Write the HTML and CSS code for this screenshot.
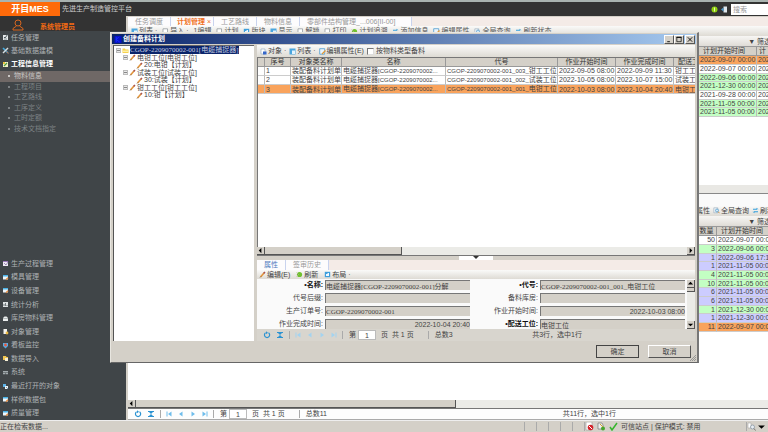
FILE: index.html
```html
<!DOCTYPE html>
<html lang="zh-CN">
<head>
    <meta charset="UTF-8">
    <meta name="viewport" content="width=device-width, initial-scale=1.0">
    <title>开目MES 先进生产制造管控平台</title>
    <link rel="stylesheet" href="styles.css">
</head>
<body>

<!-- 图标 -->
<svg class="defs" aria-hidden="true">
    <symbol id="i-task" viewBox="0 0 7 7"><path d="M1 1h5v5H1z" fill="#e4e8ea"/><path d="M2 3l1 1 3-4" stroke="#4b5558" fill="none"/><path d="M2 5h3" stroke="#8a9497"/></symbol>
    <symbol id="i-tools" viewBox="0 0 7 7"><path d="M1 1l5 5" stroke="#3fa9e0" stroke-width="1.6"/><path d="M6 1L1 6" stroke="#d5dde0" stroke-width="1.4"/><path d="M4.500 4.500l2 2" stroke="#d06a3a"/></symbol>
    <symbol id="i-note" viewBox="0 0 7 7"><path d="M1 1h5v5H1z" fill="#f2f0c8"/><path d="M2 5l3-3" stroke="#4f9a3a" stroke-width="1.3"/><path d="M1 1h2v2H1z" fill="#e8c33c"/></symbol>
    <symbol id="i-clip" viewBox="0 0 7 7"><path d="M1 1h5v5H1z" fill="#efe9f4"/><path d="M1 1h5v1H1z" fill="#9a78b8"/><path d="M2 3l2 2 2-3" stroke="#7d6a9a" fill="none" stroke-width=".7"/></symbol>
    <symbol id="i-card" viewBox="0 0 7 7"><path d="M1 1h5v4.500H1z" fill="#eef6fb"/><path d="M1 1h5v1.500H1z" fill="#4bb2e6"/><path d="M4 5.800l2-2" stroke="#e2883a" stroke-width="1.300"/></symbol>
    <symbol id="i-chart" viewBox="0 0 7 7"><path d="M1 1h5v5H1z" fill="#dfe3e4"/><path d="M2 5V3M3.500 5V2M5 5V4" stroke="#596366" stroke-width=".8"/></symbol>
    <symbol id="i-box" viewBox="0 0 7 7"><path d="M1 3l1.500-1.500h2L6 3v3H1z" fill="#eceeee"/><path d="M1 3.500h5" stroke="#8f989a" stroke-width=".6"/></symbol>
    <symbol id="i-doc" viewBox="0 0 7 7"><path d="M1.500 1H5v5H1.500z" fill="#f4f4ee"/><circle cx="5" cy="5" r="1.400" fill="#eebb45"/></symbol>
    <symbol id="i-shield" viewBox="0 0 7 7"><path d="M1 1h5v3L3.500 6.500 1 4z" fill="#56aee4"/><circle cx="3.500" cy="3" r="1.400" fill="#e9573c"/></symbol>
    <symbol id="i-import" viewBox="0 0 7 7"><path d="M1 1h3l.5 1H6v3H1z" fill="#f0c550"/><path d="M3 3h3v3H3z" fill="#f6efd5"/></symbol>
    <symbol id="i-sys" viewBox="0 0 7 7"><path d="M1 2h5v1.500H1zM1 4h2v1.200H1zM3.500 4H6v1.200H3.500z" fill="#a2abae"/></symbol>
    <symbol id="i-recent" viewBox="0 0 7 7"><path d="M1 1h3v3H1z" fill="#5fb4ea"/><path d="M3 3h3v3H3z" fill="#eef3f5"/><path d="M4 4l2 2" stroke="#4d7fa5" stroke-width=".7"/></symbol>
    <symbol id="i-obj" viewBox="0 0 7 7"><path d="M1 1h4v5H1z" fill="#fff" stroke="#8fa5bd" stroke-width=".6"/><path d="M3 3.500h3.500v3H3z" fill="#3566c9"/></symbol>
    <symbol id="i-list" viewBox="0 0 7 7"><path d="M.5.5h6v6h-6z" fill="#4ba6de"/><path d="M3 2.500h3V6H3z" fill="#e4f3fc"/></symbol>
    <symbol id="i-edit" viewBox="0 0 7 7"><path d="M.7.700h5v5.500h-5z" fill="#eaf4fb" stroke="#4f9dd0" stroke-width=".8"/><path d="M3 6l3.500-3.500" stroke="#e49a36" stroke-width="1.300"/></symbol>
    <symbol id="i-pen" viewBox="0 0 7 7"><path d="M1.500 6L5 2" stroke="#e3963c" stroke-width="1.700"/><path d="M4.600 2.400L6 1" stroke="#a9534d" stroke-width="1.500"/><path d="M1 6.500l1-1" stroke="#555" stroke-width=".8"/></symbol>
    <symbol id="i-folder" viewBox="0 0 7 7"><path d="M.5 1.500h2.500l.5 1H6.500V6h-6z" fill="#f7d24c"/><path d="M1 3.500h5V5H1z" fill="#fdf0a8"/></symbol>
    <symbol id="i-grey" viewBox="0 0 7 7"><path d="M1 .8h4.500v5.500H1z" fill="#fff" stroke="#8a9096" stroke-width=".7"/></symbol>
    <symbol id="i-green" viewBox="0 0 7 7"><circle cx="3.500" cy="3.500" r="2.600" fill="#6fc22c"/><path d="M.5 1.500l2 2-2 2" fill="none" stroke="#b9b0a0" stroke-width=".7"/></symbol>
    <symbol id="i-layout" viewBox="0 0 7 7"><path d="M.8.800h5.400v5.400H.8z" fill="#3e9fdc"/><path d="M2 3h1.500V2H5v3H2z" fill="#eef8ff"/></symbol>
    <symbol id="i-sync" viewBox="0 0 7 7"><path d="M1 2.300h4M6 4.700H2" stroke="#35a0dc" stroke-width="1.100"/><path d="M4.500.700L6.500 2.300H4.500zM2.500 6.300L.5 4.700h2z" fill="#35a0dc"/></symbol>
    <symbol id="i-search" viewBox="0 0 7 7"><path d="M.8.800h4v5h-4z" fill="#eef3f6" stroke="#9ab" stroke-width=".6"/><circle cx="4" cy="3.500" r="1.500" fill="#cfeafa" stroke="#4c97c8" stroke-width=".7"/><path d="M5 4.600l1.500 1.600" stroke="#c9863a" stroke-width=".9"/></symbol>
    <symbol id="i-refresh" viewBox="0 0 8 8"><path d="M5.500 1.800A2.600 2.600 0 1 1 2.600 1.800" fill="none" stroke="#2c93d2" stroke-width="1.200"/><path d="M3 .2v3l2-1.500z" fill="#2c93d2"/></symbol>
    <symbol id="i-fit" viewBox="0 0 8 8"><path d="M1 1.500h6M1 6.500h6" stroke="#2c93d2" stroke-width="1.100"/><path d="M2 2h4L4 4zM2 6h4L4 4z" fill="#2c93d2"/></symbol>
    <symbol id="i-first" viewBox="0 0 8 8"><path d="M2 1.500v5" stroke="currentColor"/><path d="M6.500 1.500v5L3 4z" fill="currentColor"/></symbol>
    <symbol id="i-prev" viewBox="0 0 8 8"><path d="M5.500 1.500v5L2 4z" fill="currentColor"/></symbol>
    <symbol id="i-next" viewBox="0 0 8 8"><path d="M2.500 1.500v5L6 4z" fill="currentColor"/></symbol>
    <symbol id="i-last" viewBox="0 0 8 8"><path d="M6 1.500v5" stroke="currentColor"/><path d="M1.500 1.500v5L5 4z" fill="currentColor"/></symbol>
    <symbol id="i-left" viewBox="0 0 8 8"><path d="M5 1v6L2 4z"/></symbol>
    <symbol id="i-right" viewBox="0 0 8 8"><path d="M3 1v6l3-3z"/></symbol>
    <symbol id="i-up" viewBox="0 0 8 8"><path d="M1 5h6L4 2z"/></symbol>
    <symbol id="i-down" viewBox="0 0 8 8"><path d="M1 3h6L4 6z"/></symbol>
</svg>

<header class="top">
    <div class="logo">开目MES</div>
    <h1>先进生产制造管控平台</h1>
    <svg class="top-icon" viewBox="0 0 7 7"><circle cx="3.500" cy="3.500" r="3" fill="#8fd010"/><path d="M3.500 1.500v4" stroke="#e9f7b0"/></svg>
    <svg class="top-icon" viewBox="0 0 7 7"><path d="M2.500.5H6v6H2.500z" fill="#dfe7ec"/><path d="M0 3.500l2.500-2v4z" fill="#4d9bd0"/></svg>
    <input class="search" type="text" placeholder="搜索" aria-label="搜索">
</header>

<div class="layout">
    <aside class="side">
        <div class="user">
            <svg class="user-icon" viewBox="0 0 12 12"><circle cx="6" cy="4" r="3" fill="none" stroke="#d9661f"/><path d="M1 11V9.500L4.500 7M11 11V9.500L7.500 7M1 11h10" fill="none" stroke="#d9661f"/></svg>
            <span>系统管理员</span>
        </div>
        <nav class="menu menu-top">
            <a href="#"><svg class="ico"><use href="#i-task"/></svg>任务管理</a>
            <a href="#"><svg class="ico"><use href="#i-tools"/></svg>基础数据建模</a>
            <a href="#" class="open"><svg class="ico"><use href="#i-note"/></svg>工程信息管理</a>
        </nav>
        <nav class="submenu">
            <a href="#" class="current">物料信息</a>
            <a href="#">工程项目</a>
            <a href="#">工艺路线</a>
            <a href="#">工序定义</a>
            <a href="#">工时定额</a>
            <a href="#">技术文档指定</a>
        </nav>
        <nav class="menu menu-bottom">
            <a href="#"><svg class="ico"><use href="#i-clip"/></svg>生产过程管理</a>
            <a href="#"><svg class="ico"><use href="#i-card"/></svg>模具管理</a>
            <a href="#"><svg class="ico"><use href="#i-card"/></svg>设备管理</a>
            <a href="#"><svg class="ico"><use href="#i-chart"/></svg>统计分析</a>
            <a href="#"><svg class="ico"><use href="#i-box"/></svg>库房物料管理</a>
            <a href="#"><svg class="ico"><use href="#i-doc"/></svg>对象管理</a>
            <a href="#"><svg class="ico"><use href="#i-shield"/></svg>看板监控</a>
            <a href="#"><svg class="ico"><use href="#i-import"/></svg>数据导入</a>
            <a href="#"><svg class="ico"><use href="#i-sys"/></svg>系统</a>
            <a href="#"><svg class="ico"><use href="#i-recent"/></svg>最近打开的对象</a>
            <a href="#"><svg class="ico"><use href="#i-card"/></svg>样例数据包</a>
            <a href="#"><svg class="ico"><use href="#i-card"/></svg>质量管理</a>
        </nav>
    </aside>

    <main class="content">
        <div class="tabs main-tabs">
            <a href="#">任务调度</a>
            <a href="#" class="active">计划管理<span class="x">×</span></a>
            <a href="#">工艺路线</a>
            <a href="#">物料信息</a>
            <a href="#" class="wide">零部件结构管理_...006[II-00]</a>
        </div>
        <div class="toolbar main-toolbar">
            <button><svg class="ico"><use href="#i-list"/></svg>列表 ·</button>
            <button><svg class="ico"><use href="#i-grey"/></svg>导入 ·</button>
            <button>1编辑</button>
            <button><svg class="ico"><use href="#i-grey"/></svg>计划</button>
            <button><svg class="ico"><use href="#i-layout"/></svg>版块</button>
            <button><svg class="ico"><use href="#i-list"/></svg>显示</button>
            <button><svg class="ico"><use href="#i-grey"/></svg>解锁</button>
            <button><svg class="ico"><use href="#i-grey"/></svg>打印</button>
            <button><svg class="ico"><use href="#i-green"/></svg>计划追溯</button>
            <button><svg class="ico"><use href="#i-sync"/></svg>添加信息</button>
            <button><svg class="ico"><use href="#i-edit"/></svg>编辑属性</button>
            <button><svg class="ico"><use href="#i-search"/></svg>全局查询</button>
            <button><svg class="ico"><use href="#i-sync"/></svg>刷新状态</button>
        </div>

        <div class="filter">▼ 筛选</div>
        <div class="pane pane-plan">
            <table class="grid">
                <colgroup><col><col class="c-date"><col class="c-cut"></colgroup>
                <thead><tr><th></th><th class="lead">计划开始时间</th><th>计</th></tr></thead>
                <tbody>
                    <tr class="orange"><td></td><td>2022-09-07 00:00</td><td>202</td></tr>
                    <tr><td></td><td>2022-09-07 00:00</td><td>202</td></tr>
                    <tr class="green"><td></td><td>2022-09-06 00:00</td><td>202</td></tr>
                    <tr class="green"><td></td><td>2021-12-30 00:00</td><td>202</td></tr>
                    <tr><td></td><td>2021-09-28 00:00</td><td>202</td></tr>
                    <tr class="green"><td></td><td>2021-11-05 00:00</td><td>202</td></tr>
                    <tr class="green"><td></td><td>2021-11-05 00:00</td><td>202</td></tr>
                </tbody>
            </table>
        </div>
        <div class="strip"></div>

        <div class="sub-tabs"></div>
        <div class="toolbar right-toolbar">
            <button>属性</button>
            <button><svg class="ico"><use href="#i-search"/></svg>全局查询</button>
            <button><svg class="ico"><use href="#i-sync"/></svg>刷新</button>
        </div>
        <div class="filter">▼ 筛选</div>
        <div class="pane pane-detail">
            <table class="grid">
                <colgroup><col><col class="c-num"><col class="c-last"></colgroup>
                <thead><tr><th></th><th>数量</th><th class="lead">计划开始时间</th></tr></thead>
                <tbody>
                    <tr><td></td><td class="num">50</td><td>2022-09-07 00:0</td></tr>
                    <tr class="green"><td></td><td class="num">3</td><td>2022-09-06 00:0</td></tr>
                    <tr class="violet"><td></td><td class="num">1</td><td>2022-09-06 17:1</td></tr>
                    <tr class="violet"><td></td><td class="num">1</td><td>2021-11-05 00:0</td></tr>
                    <tr class="green"><td></td><td class="num">4</td><td>2021-11-05 00:0</td></tr>
                    <tr class="green"><td></td><td class="num">10</td><td>2021-11-05 00:0</td></tr>
                    <tr class="violet"><td></td><td class="num">6</td><td>2021-11-05 00:0</td></tr>
                    <tr class="violet"><td></td><td class="num">6</td><td>2021-11-05 00:0</td></tr>
                    <tr class="green"><td></td><td class="num">1</td><td>2021-12-30 00:0</td></tr>
                    <tr class="violet"><td></td><td class="num">1</td><td>2021-12-30 00:0</td></tr>
                    <tr class="orange"><td></td><td class="num">11</td><td>2022-09-07 00:0</td></tr>
                </tbody>
            </table>
        </div>
        <div class="hscroll main-scroll">
            <button class="arrow" aria-label="向左"><svg><use href="#i-left"/></svg></button>
            <div class="thumb"></div>
        </div>
        <div class="pager main-pager">
            <button aria-label="刷新"><svg><use href="#i-refresh"/></svg></button>
            <button aria-label="适应"><svg><use href="#i-fit"/></svg></button>
            <div class="nav-btns">
                <button aria-label="首页"><svg><use href="#i-first"/></svg></button>
                <button aria-label="上一页"><svg><use href="#i-prev"/></svg></button>
                <button aria-label="下一页"><svg><use href="#i-next"/></svg></button>
                <button aria-label="末页"><svg><use href="#i-last"/></svg></button>
            </div>
            <label for="page-main">第</label>
            <input id="page-main" type="text" value="1">
            <span class="pages">页&nbsp; 共 1 页</span>
            <span class="total">总数11</span>
            <span class="sum">共11行，选中1行</span>
        </div>
    </main>
</div>

<footer class="status">
    <span class="loading">正在检索数据...</span>
    <span class="cell"></span><span class="cell"></span><span class="cell"></span><span class="cell"></span><span class="cell"></span>
    <span class="zone">
        <svg viewBox="0 0 9 9"><path d="M1 0h6v8H1z" fill="#fff" stroke="#999" stroke-width=".6"/><circle cx="5.500" cy="5.500" r="2.800" fill="#d3222a"/><path d="M4 4l3 3" stroke="#fff"/></svg>
        <svg viewBox="0 0 9 9"><path d="M1 1h4l1 2v4H1z" fill="#eee" stroke="#777" stroke-width=".7"/><circle cx="6" cy="6.500" r="2" fill="#46a52e"/><path d="M3 2l3 3" stroke="#c9a22c"/></svg>
        <svg viewBox="0 0 9 9"><path d="M1 5l2 3L8 1" fill="none" stroke="#35b52c" stroke-width="1.500"/></svg>
        <span>可信站点 | 保护模式: 禁用</span>
    </span>
    <span class="zoom">
        <svg viewBox="0 0 9 9"><path d="M1 1h3v5H1z" fill="#fff" stroke="#aaa" stroke-width=".6"/><circle cx="5.500" cy="5" r="2" fill="#e8eef3" stroke="#8b98a5" stroke-width=".8"/><path d="M7 6.500l1.500 2" stroke="#777"/></svg>
        <svg viewBox="0 0 8 8"><use href="#i-down"/></svg>
    </span>
</footer>

<!-- 创建备料计划 -->
<section class="dialog" role="dialog" aria-labelledby="dialog-title">
    <div class="titlebar">
        <svg class="app-icon" viewBox="0 0 8 8"><path d="M0 0h8v8H0z" fill="#0a12c8"/><path d="M2 1v6M2 4l3-3M2 4l4 3" stroke="#1734ff" fill="none"/></svg>
        <h2 id="dialog-title">创建备料计划</h2>
        <button aria-label="最小化"><svg viewBox="0 0 8 8"><path d="M2 6.500h3" stroke="#000"/></svg></button>
        <button aria-label="最大化"><svg viewBox="0 0 8 8"><path d="M1 1.500h6" stroke="#000"/><path d="M1.500 1.500h5v5h-5z" fill="none" stroke="#000" stroke-width=".8"/></svg></button>
        <button aria-label="关闭" class="close"><svg viewBox="0 0 8 8"><path d="M1.500 1.500l5 5M6.500 1.500l-5 5" stroke="#000"/></svg></button>
    </div>

    <div class="dialog-body">
        <ul class="tree">
            <li><i class="knob"></i><svg class="ico"><use href="#i-folder"/></svg><span class="sel">CGOP-2209070002-001[电缆捕捉器]</span></li>
            <li class="l1"><i class="knob"></i><svg class="ico"><use href="#i-pen"/></svg>电钳工位[电钳工位]</li>
            <li class="l2"><svg class="ico"><use href="#i-pen"/></svg>20:电钳【计划】</li>
            <li class="l1"><i class="knob"></i><svg class="ico"><use href="#i-pen"/></svg>试装工位[试装工位]</li>
            <li class="l2"><svg class="ico"><use href="#i-pen"/></svg>30:试装【计划】</li>
            <li class="l1"><i class="knob"></i><svg class="ico"><use href="#i-pen"/></svg>钳工工位[钳工工位]</li>
            <li class="l2"><svg class="ico"><use href="#i-pen"/></svg>10:钳【计划】</li>
        </ul>

        <div class="work">
            <div class="toolbar work-toolbar">
                <button><svg class="ico"><use href="#i-obj"/></svg>对象 ·</button>
                <button><svg class="ico"><use href="#i-list"/></svg>列表 ·</button>
                <button><svg class="ico"><use href="#i-edit"/></svg>编辑属性(E)</button>
                <span class="check"><input type="checkbox" id="by-type"><label for="by-type">按物料类型备料</label></span>
            </div>
            <div class="pane work-pane">
                <table class="grid">
                    <colgroup><col class="w-mark"><col class="w-no"><col class="w-type"><col class="w-name"><col class="w-code"><col class="w-date"><col class="w-date"><col></colgroup>
                    <thead><tr><th></th><th>序号</th><th>对象类名称</th><th>名称</th><th>代号</th><th>作业开始时间</th><th>作业完成时间</th><th class="lead">配送工</th></tr></thead>
                    <tbody>
                        <tr><td></td><td>1</td><td>装配备料计划单</td><td>电缆捕捉器<span class="code">[CGOP-2209070002...</span></td><td><span class="code">CGOP-2209070002-001_003_</span>钳工工位</td><td>2022-09-05 08:00</td><td>2022-09-09 11:30</td><td>钳工工</td></tr>
                        <tr><td></td><td>2</td><td>装配备料计划单</td><td>电缆捕捉器<span class="code">[CGOP-2209070002...</span></td><td><span class="code">CGOP-2209070002-001_002_</span>试装工位</td><td>2022-10-05 08:00</td><td>2022-10-07 15:00</td><td>试装工</td></tr>
                        <tr class="orange"><td></td><td>3</td><td>装配备料计划单</td><td>电缆捕捉器<span class="code">[CGOP-2209070002...</span></td><td><span class="code">CGOP-2209070002-001_001_</span>电钳工位</td><td>2022-10-03 08:00</td><td>2022-10-04 20:40</td><td>电钳工</td></tr>
                    </tbody>
                </table>
            </div>
            <div class="hscroll work-scroll">
                <button class="arrow" aria-label="向左"><svg><use href="#i-left"/></svg></button>
                <div class="thumb"></div>
                <button class="arrow end" aria-label="向右"><svg><use href="#i-right"/></svg></button>
            </div>
            <div class="splitter"><span><svg viewBox="0 0 8 4"><path d="M1 0h6L4 3z" fill="#333"/></svg></span></div>

            <div class="tabs work-tabs">
                <a href="#" class="active">属性</a>
                <a href="#">签审历史</a>
            </div>
            <div class="toolbar form-toolbar">
                <button><svg class="ico"><use href="#i-pen"/></svg>编辑(E)</button>
                <button><svg class="ico"><use href="#i-green"/></svg>刷新</button>
                <button><svg class="ico"><use href="#i-layout"/></svg>布局 ·</button>
            </div>
            <div class="form-wrap">
                <form class="form">
                    <label for="f-name" class="req">•名称:</label>
                    <input id="f-name" type="text" value="电缆捕捉器[CGOP-2209070002-001]分解" readonly>
                    <label for="f-code" class="req">•代号:</label>
                    <input id="f-code" type="text" value="CGOP-2209070002-001_001_电钳工位" readonly>
                    <label for="f-suffix">代号后缀:</label>
                    <input id="f-suffix" type="text" readonly>
                    <label for="f-store">备料库房:</label>
                    <input id="f-store" type="text" readonly>
                    <label for="f-order">生产订单号:</label>
                    <input id="f-order" type="text" value="CGOP-2209070002-001" readonly>
                    <label for="f-start">作业开始时间:</label>
                    <input id="f-start" class="date" type="text" value="2022-10-03 08:00" readonly>
                    <label for="f-end">作业完成时间:</label>
                    <input id="f-end" class="date" type="text" value="2022-10-04 20:40" readonly>
                    <label for="f-place" class="req">•配送工位:</label>
                    <input id="f-place" type="text" value="电钳工位" readonly>
                </form>
                <div class="vscroll">
                    <button class="arrow" aria-label="向上"><svg><use href="#i-up"/></svg></button>
                    <div class="thumb"></div>
                    <button class="arrow end" aria-label="向下"><svg><use href="#i-down"/></svg></button>
                </div>
            </div>
            <div class="pager">
                <button aria-label="刷新"><svg><use href="#i-refresh"/></svg></button>
                <button aria-label="适应"><svg><use href="#i-fit"/></svg></button>
                <div class="nav-btns">
                    <button aria-label="首页"><svg><use href="#i-first"/></svg></button>
                    <button aria-label="上一页"><svg><use href="#i-prev"/></svg></button>
                    <button aria-label="下一页"><svg><use href="#i-next"/></svg></button>
                    <button aria-label="末页"><svg><use href="#i-last"/></svg></button>
                </div>
                <label for="page-work">第</label>
                <input id="page-work" type="text" value="1">
                <span class="pages">页&nbsp; 共 1 页</span>
                <span class="total">总数3</span>
                <span class="sum">共3行，选中1行</span>
            </div>
        </div>
    </div>

    <div class="actions">
        <button class="ok">确定</button>
        <button>取消</button>
        <svg class="grip" viewBox="0 0 6 6"><path d="M0 6l6-6M2 6l4-4M4 6l2-2" stroke="#888" stroke-width=".8"/></svg>
    </div>
</section>

</body>
</html>
```
FILE: styles.css
```css
* {
    box-sizing: border-box;
}
body {
    margin: 0;
    height: 100vh;
    display: flex;
    flex-direction: column;
    position: relative;
    overflow: hidden;
    background: #d4d0c8;
    color: #444;
    font-family: "Liberation Sans", "Noto Sans CJK SC", sans-serif;
    font-size: 7px;
    line-height: 8px;
    white-space: nowrap;
}
button, input {
    font: inherit;
    color: inherit;
    margin: 0;
    padding: 0;
    border: 0;
    border-radius: 0;
    background: none;
}
a {
    color: inherit;
    text-decoration: none;
}
h1, h2 {
    margin: 0;
    font-size: 7px;
}
svg {
    display: block;
    flex: none;
}
.defs {
    position: absolute;
    width: 0;
    height: 0;
}
.ico {
    width: 7px;
    height: 7px;
}

/* шапка */
.top {
    display: flex;
    align-items: center;
    height: 16px;
    border-top: 2px solid #a9b3b0;
    background: #333;
    color: #ccc;
}
.logo {
    width: 60px;
    line-height: 14px;
    background: #ff6a0a;
    color: #fff;
    font-size: 9px;
    font-weight: bold;
    text-align: center;
}
.top h1 {
    flex: 1;
    margin-left: 2px;
    font-weight: normal;
}
.top-icon {
    width: 7px;
    height: 7px;
    margin-right: 3px;
}
.search {
    width: 37px;
    height: 11px;
    padding-left: 2px;
    background: #fff;
}
.search::placeholder {
    color: #999;
}

.layout {
    flex: 1;
    display: flex;
    min-height: 0;
}
.side {
    width: 126px;
    display: flex;
    flex-direction: column;
    background: #404548;
    color: #aeb2b4;
}
.user {
    display: flex;
    align-items: flex-end;
    height: 15px;
    padding-left: 12px;
    gap: 16px;
    background: #333;
    color: #f26a14;
    font-weight: bold;
}
.user-icon {
    width: 12px;
    height: 12px;
}
.menu, .submenu {
    display: grid;
    grid-auto-rows: 1fr;
}
.menu a {
    display: flex;
    align-items: center;
    gap: 2px;
    padding-left: 2px;
}
.menu-top {
    height: 40px;
}
.menu .open {
    color: #fff;
    font-weight: bold;
}
.submenu {
    height: 63px;
    color: #7d8285;
}
.submenu a {
    display: flex;
    align-items: center;
    padding-left: 8px;
}
.submenu a::before {
    content: "";
    width: 2px;
    height: 2px;
    margin-right: 4px;
    background: currentColor;
}
.submenu .current {
    background: #6f6866;
    color: #c9c6c4;
}
.menu-bottom {
    height: 163px;
    margin-top: auto;
}

.content {
    flex: 1;
    min-width: 0;
    display: flex;
    flex-direction: column;
    margin: 1px 0 0 2px;
    background: #fff;
}
.tabs {
    display: flex;
    height: 9px;
    background: #f4ebe7;
    color: #999;
}
.tabs a {
    padding: 0 7px;
    line-height: 9px;
    background: #fdfcfd;
    border-right: 1px solid #c9d3ee;
}
.main-tabs .active {
    padding: 0 2px 0 6px;
    color: #f0731f;
    font-weight: bold;
}
.tabs .wide {
    min-width: 112px;
}
.x {
    margin-left: 2px;
    font-weight: normal;
}
.toolbar {
    display: flex;
    align-items: center;
    background: linear-gradient(#fafaf9, #dedbd4);
}
.toolbar button {
    display: flex;
    align-items: center;
    gap: 1px;
}
.main-toolbar {
    height: 10px;
    padding-left: 3px;
    gap: 5px;
    color: #555;
}
.filter {
    height: 11px;
    margin-right: -3px;
    line-height: 11px;
    text-align: right;
    background: linear-gradient(#f7f6f4, #dfdcd6);
    border-bottom: 1px solid #999;
}

/* таблицы */
.pane {
    min-height: 0;
    overflow: hidden;
    background: #fff;
}
.pane-plan {
    flex: 138;
}
.pane-detail {
    flex: 174;
}
.grid {
    width: 100%;
    table-layout: fixed;
    border-collapse: separate;
    border-spacing: 0;
}
.grid th, .grid td {
    padding: 0 0 0 1px;
    overflow: hidden;
    line-height: 8px;
    border-right: 1px solid #bbb;
    border-bottom: 1px solid #ccc;
    text-align: left;
}
.grid th {
    padding: 0;
    background: #d4d0c8;
    border-color: #999;
    color: #333;
    font-weight: normal;
    text-align: center;
}
.grid tbody tr:nth-child(3n) td {
    line-height: 7px;
}
.grid .num {
    padding-right: 1px;
    text-align: right;
}
.grid .lead {
    padding-left: 4px;
    text-align: left;
}
.grid th:last-child, .grid td:last-child {
    border-right: 0;
}
.grid .code {
    font-size: 6px;
}
.orange td {
    background: #f9a35c;
}
.green td {
    background: #c3ffc3;
}
.violet td {
    background: #ccccff;
}
.c-date, .w-date {
    width: 58px;
}
.c-cut {
    width: 11px;
}
.c-num {
    width: 20px;
}
.c-last {
    width: 51px;
}
.strip {
    height: 9px;
    background: #e9e8e4;
    border-bottom: 1px solid #888;
}
.sub-tabs {
    height: 12px;
    background: #fafafa;
}
.right-toolbar {
    height: 10px;
    margin-right: -6px;
    justify-content: flex-end;
    gap: 3px;
}

/* полосы прокрутки */
.hscroll {
    display: flex;
    height: 9px;
    background: #ebebe7;
    border-bottom: 1px solid #777;
}
.arrow, .thumb {
    background: #d4d0c8;
    border-right: 1px solid #555;
    border-bottom: 1px solid #555;
}
.arrow {
    width: 8px;
    height: 8px;
}
.arrow svg {
    width: 7px;
    height: 7px;
}
.hscroll .end {
    margin-left: auto;
}
.main-scroll .thumb {
    width: 50%;
}
.work-scroll .thumb {
    width: 137px;
}
.vscroll {
    display: flex;
    flex-direction: column;
    width: 8px;
    background: #ebebe7;
}
.vscroll .thumb {
    height: 4px;
}
.vscroll .end {
    margin-top: auto;
}

.pager {
    display: flex;
    align-items: center;
    height: 12px;
    padding-left: 6px;
    background: #d8d5ce;
}
.pager svg {
    width: 8px;
    height: 8px;
}
.pager > button {
    margin-right: 5px;
}
.nav-btns {
    display: flex;
    gap: 4px;
    margin-right: 6px;
    padding: 0 4px;
    border-left: 1px solid #aaa;
    border-right: 1px solid #aaa;
    color: #a3d3f0;
}
.pager input {
    width: 18px;
    height: 10px;
    margin: 0 5px 0 2px;
    border: 1px solid #bbb;
    background: #fff;
    text-align: center;
}
.total {
    margin-left: 14px;
    padding-left: 6px;
    border-left: 1px solid #aaa;
}
.main-pager {
    height: 11px;
    background: #fdfdfd;
    border-bottom: 1px solid #aaa;
}
.main-pager .nav-btns {
    color: #6fbdec;
}
.sum {
    margin: 0 152px 0 auto;
}
.dialog .sum {
    margin-right: 113px;
}

.status {
    display: flex;
    align-items: center;
    height: 12px;
    border-top: 1px solid #eee;
}
.loading {
    flex: 1;
}
.cell {
    width: 12px;
    height: 9px;
    border-left: 1px solid #aaa;
}
.zone, .zoom {
    display: flex;
    align-items: center;
    gap: 3px;
    border-left: 1px solid #aaa;
}
.zone {
    width: 162px;
}
.zone svg, .zoom svg {
    width: 9px;
    height: 9px;
}
.zoom {
    width: 22px;
    gap: 1px;
}

/* окно */
.dialog {
    position: absolute;
    top: 32px;
    right: 69px;
    bottom: 69px;
    left: 110px;
    display: flex;
    flex-direction: column;
    padding: 1px;
    background: #d4d0c8;
    border: 1px solid #e8e6e0;
    border-right: 2px solid #777;
    border-bottom: 1px solid #666;
}
.titlebar {
    display: flex;
    align-items: center;
    height: 10px;
    padding: 0 1px 0 2px;
    background: linear-gradient(to right, #0a246a, #a6caf0);
}
.titlebar h2 {
    flex: 1;
    margin-left: 1px;
    color: #fff;
}
.app-icon {
    width: 8px;
    height: 8px;
}
.titlebar button {
    width: 10px;
    height: 9px;
    background: #d4d0c8;
    border: 1px solid #fff;
    border-right-color: #555;
    border-bottom-color: #555;
}
.titlebar svg {
    margin: auto;
    width: 8px;
    height: 7px;
}
.titlebar .close {
    margin-left: 1px;
}
.dialog-body {
    flex: 1;
    display: flex;
    gap: 3px;
    min-height: 0;
    padding: 1px 1px 0 1px;
}
.tree {
    width: 141px;
    margin: 0;
    padding: 0 0 0 2px;
    list-style: none;
    background: #fff;
    border-top: 1px solid #666;
    border-left: 1px solid #555;
}
.tree li {
    display: flex;
    align-items: center;
    height: 8px;
    gap: 1px;
}
.tree li:nth-child(2n) {
    height: 7px;
}
.tree .l1 {
    padding-left: 7px;
}
.tree .l2 {
    padding-left: 20px;
}
.knob {
    width: 5px;
    height: 5px;
    background: linear-gradient(#888, #888) center / 3px 1px no-repeat, #e9e9e9;
    border: 1px solid #bbb;
}
.sel {
    background: #0a246a;
    color: #c6cde0;
    font-family: "Liberation Serif", "Noto Sans CJK SC", serif;
}
.work {
    flex: 1;
    min-width: 0;
    display: flex;
    flex-direction: column;
}
.work-toolbar {
    height: 12px;
    padding-left: 3px;
    gap: 3px;
}
.check {
    display: flex;
    align-items: center;
    gap: 2px;
}
.check input {
    appearance: none;
    width: 7px;
    height: 7px;
    background: #fff;
    border: 1px solid #777;
    border-right-color: #ddd;
    border-bottom-color: #ddd;
}
.work-pane {
    flex: 1;
    border-top: 1px solid #777;
    border-left: 1px solid #777;
}
.w-mark {
    width: 7px;
}
.w-no {
    width: 26px;
}
.w-type {
    width: 51px;
}
.w-name {
    width: 104px;
}
.w-code {
    width: 112px;
}
.splitter {
    display: flex;
    justify-content: center;
    height: 4px;
}
.splitter span {
    width: 34px;
    background: #fff;
}
.splitter svg {
    width: 8px;
    height: 4px;
    margin: auto;
}
.work-tabs {
    height: 10px;
}
.work-tabs .active {
    color: #4f79bd;
}
.form-toolbar {
    height: 9px;
    padding-left: 2px;
    gap: 6px;
}
.form-wrap {
    display: flex;
    height: 50px;
    padding-top: 1px;
    background: #fafafa;
}
.form {
    flex: 1;
    display: grid;
    grid-template-columns: 66px 1fr 66px 1fr;
    grid-auto-rows: 10px;
    gap: 3px 2px;
    padding-right: 2px;
}
.form label {
    line-height: 10px;
    text-align: right;
}
.form .req {
    color: #111;
    font-weight: bold;
}
.form input {
    min-width: 0;
    width: 100%;
    height: 10px;
    background: #d4d0c8;
    border-top: 1px solid #777;
    border-left: 1px solid #777;
    font-family: "Liberation Serif", "Noto Sans CJK SC", serif;
}
.form .date {
    font-family: "Liberation Sans", sans-serif;
    text-align: right;
}
.actions {
    display: flex;
    justify-content: flex-end;
    height: 20px;
    padding: 4px 4px 0 0;
    gap: 9px;
}
.actions button {
    width: 43px;
    height: 13px;
    border: 1px solid #fff;
    border-right-color: #555;
    border-bottom-color: #555;
}
.actions .ok {
    border-color: #444;
}
.grip {
    width: 6px;
    height: 6px;
    margin: auto -4px 0 -10px;
}
```
